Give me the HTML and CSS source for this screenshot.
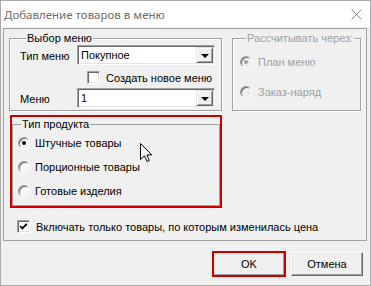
FILE: index.html
```html
<!DOCTYPE html>
<html lang="ru">
<head>
    <meta charset="UTF-8">
    <title>Добавление товаров в меню</title>
    <link rel="stylesheet" href="styles.css">
</head>
<body>
    <div class="window">
        <div class="titlebar">
            <span class="title">Добавление товаров в меню</span>
            <svg class="close" width="11" height="11" viewBox="0 0 11 11">
                <path d="M0.5 0.5 L10.5 10.5 M10.5 0.5 L0.5 10.5" stroke="#8a8a8a" stroke-width="1" fill="none"/>
            </svg>
        </div>
        <div class="client">
            <div class="panel">
                <div class="top-row">
                    <fieldset class="group menu-group">
                        <legend>Выбор меню</legend>
                        <div class="field-row">
                            <span class="field-label">Тип меню</span>
                            <div class="combo">
                                <span class="combo-text">Покупное</span>
                                <span class="combo-btn"><i class="arrow"></i></span>
                            </div>
                        </div>
                        <div class="check-row new-menu">
                            <span class="checkbox"></span>
                            <span>Создать новое меню</span>
                        </div>
                        <div class="field-row menu-row">
                            <span class="field-label">Меню</span>
                            <div class="combo">
                                <span class="combo-text">1</span>
                                <span class="combo-btn"><i class="arrow"></i></span>
                            </div>
                        </div>
                    </fieldset>
                    <fieldset class="group calc-group disabled">
                        <legend>Рассчитывать через:</legend>
                        <div class="radio-row">
                            <span class="radio checked"></span>
                            <span>План меню</span>
                        </div>
                        <div class="radio-row">
                            <span class="radio"></span>
                            <span>Заказ-наряд</span>
                        </div>
                    </fieldset>
                </div>

                <div class="highlight">
                    <fieldset class="group product-group">
                        <legend>Тип продукта</legend>
                        <div class="radio-row">
                            <span class="radio checked"></span>
                            <span>Штучные товары</span>
                        </div>
                        <div class="radio-row">
                            <span class="radio"></span>
                            <span>Порционные товары</span>
                        </div>
                        <div class="radio-row">
                            <span class="radio"></span>
                            <span>Готовые изделия</span>
                        </div>
                    </fieldset>
                </div>

                <div class="check-row price-row">
                    <span class="checkbox">
                        <svg width="9" height="9" viewBox="0 0 9 9">
                            <polyline points="1.2,4 3.4,6.4 7.8,1.8" stroke="#000" stroke-width="1.8" fill="none"/>
                        </svg>
                    </span>
                    <span>Включать только товары, по которым изменилась цена</span>
                </div>
            </div>

            <div class="buttons">
                <button class="btn btn-ok">OK</button>
                <button class="btn">Отмена</button>
            </div>
        </div>

        <!-- mouse pointer -->
        <svg class="cursor" width="13" height="20" viewBox="0 0 13 20">
            <path d="M0.5 0.5 L0.5 16.5 L4.5 12.8 L7 18.5 L9.3 17.5 L6.9 11.9 L11.8 11.9 Z" fill="#fff" stroke="#000" stroke-width="1"/>
        </svg>
    </div>
</body>
</html>
```

FILE: styles.css
```css
* {
    box-sizing: border-box;
}
body {
    margin: 0;
    font-family: "Liberation Sans", Arial, sans-serif;
    font-size: 11px;
    color: #000;
    white-space: nowrap;
}
.window {
    position: relative;
    width: 371px;
    height: 286px;
    border: 1px solid #aaaaaa;
    background-color: #f0f0f0;
}
.titlebar {
    height: 26px;
    background-color: white;
    display: flex;
    align-items: center;
    justify-content: space-between;
    padding: 0 8px 0 3px;
}
.title {
    font-family: "Noto Sans", sans-serif;
    font-size: 11.5px;
    color: #6d6d6d;
}
.client {
    padding: 1px 3px 0 2px;
}
.panel {
    height: 213px;
    border: 1px solid #a0a0a0;
    padding: 2px 5px 0 5px;
}
.top-row {
    display: flex;
    gap: 10px;
}
.group {
    margin: 0;
    padding: 0;
    min-width: 0;
    border: 1px solid #a0a0a0;
    box-shadow: 1px 1px 0 #fff, inset 1px 1px 0 #fff;
}
.group legend {
    margin-left: 6px;
    padding: 0 1px;
    line-height: 14px;
    background-color: #f0f0f0;
}
.menu-group {
    width: 213px;
    height: 80px;
    padding-left: 10px;
}
.calc-group {
    flex: 1;
    height: 80px;
    padding-left: 7px;
}
.disabled {
    color: #a0a0a0;
}

/* combo boxes */
.field-row {
    display: flex;
    align-items: center;
}
.field-label {
    width: 57px;
    padding-top: 2px;
}
.menu-row {
    margin-top: 4px;
}
.combo {
    width: 138px;
    height: 20px;
    display: flex;
    align-items: center;
    background-color: white;
    border: 1px solid;
    border-color: #a0a0a0 #fff #fff #a0a0a0;
    box-shadow: inset 1px 1px 0 #696969, inset -1px -1px 0 #e3e3e3;
    padding: 1px;
}
.combo-text {
    flex: 1;
    padding-left: 2px;
}
.combo-btn {
    width: 17px;
    height: 16px;
    display: flex;
    align-items: center;
    justify-content: center;
    background-color: #f0f0f0;
    border: 1px solid;
    border-color: #e3e3e3 #696969 #696969 #e3e3e3;
    box-shadow: inset 1px 1px 0 #fff, inset -1px -1px 0 #a0a0a0;
}
.arrow {
    width: 0;
    height: 0;
    border-left: 4px solid transparent;
    border-right: 4px solid transparent;
    border-top: 4px solid #000;
    margin-top: 1px;
}

/* checkboxes */
.check-row {
    display: flex;
    align-items: center;
    gap: 6px;
}
.new-menu {
    margin-top: 6px;
    padding-left: 67px;
}
.checkbox {
    width: 13px;
    height: 13px;
    display: flex;
    align-items: center;
    justify-content: center;
    background-color: white;
    border: 1px solid;
    border-color: #a0a0a0 #fff #fff #a0a0a0;
    box-shadow: inset 1px 1px 0 #696969, inset -1px -1px 0 #e3e3e3;
}
.price-row {
    margin-top: 12px;
    margin-left: 8px;
}

/* radio buttons */
.radio-row {
    height: 24px;
    display: flex;
    align-items: center;
    gap: 5px;
}
.calc-group .radio-row {
    gap: 6px;
    margin-top: 5px;
}
.calc-group .radio-row + .radio-row {
    margin-top: 6px;
}
.radio {
    position: relative;
    width: 12px;
    height: 12px;
    border-radius: 50%;
    background-color: white;
    border: 1px solid;
    border-color: #a0a0a0 #fff #fff #a0a0a0;
    box-shadow: inset 1px 1px 0 #696969, inset -1px -1px 0 #e3e3e3;
}
.radio.checked::after {
    content: "";
    position: absolute;
    left: 3px;
    top: 3px;
    width: 4px;
    height: 4px;
    border-radius: 50%;
    background-color: #000;
}
.disabled .radio {
    background-color: #f0f0f0;
}
.disabled .radio.checked::after {
    background-color: #a0a0a0;
}

/* red marked product type block */
.highlight {
    width: 212px;
    height: 93px;
    margin: 4px 0 0 1px;
    border: 2px solid #cc0000;
}
.product-group {
    height: 100%;
    padding-left: 5px;
    box-shadow: none;
}
.product-group legend {
    margin-left: 3px;
}

/* dialog buttons */
.buttons {
    display: flex;
    justify-content: flex-end;
    gap: 6px;
    margin-top: 11px;
    padding-right: 4px;
}
.btn {
    width: 72px;
    height: 24px;
    font-family: "Liberation Sans", Arial, sans-serif;
    font-size: 11px;
    color: #000;
    background-color: #f0f0f0;
    border: 1px solid;
    border-color: #fff #696969 #696969 #fff;
    box-shadow: inset -1px -1px 0 #a0a0a0, inset 1px 1px 0 #e3e3e3;
    padding: 0;
}
.btn-ok {
    outline: 2px solid #cc0000;
    outline-offset: -1px;
}
.cursor {
    position: absolute;
    left: 139px;
    top: 142px;
}
```
